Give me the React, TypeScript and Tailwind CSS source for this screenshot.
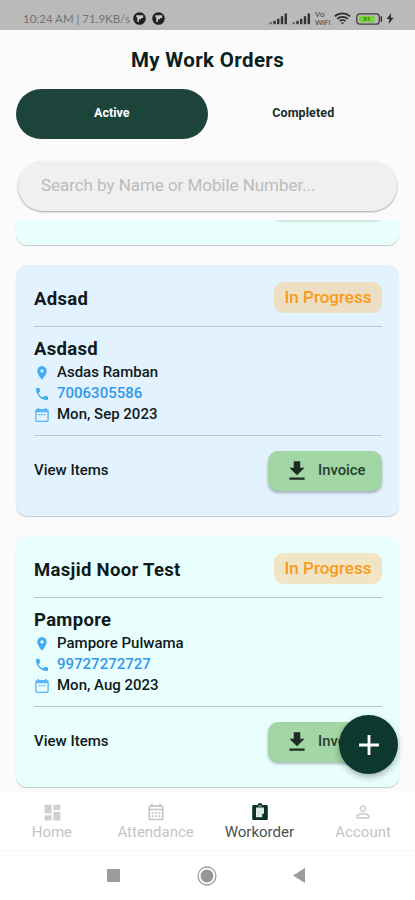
import { useState } from 'react';
import clsx from 'clsx';
import {
  MdAdd,
  MdDashboard,
  MdDownload,
  MdLocationOn,
  MdOutlineCalendarMonth,
  MdPersonOutline,
  MdPhone,
} from 'react-icons/md';

type WorkOrder = {
  id: number;
  title: string;
  customer: string;
  address: string;
  phone: string;
  date: string;
  status: string;
};

const orders: WorkOrder[] = [
  {
    id: 1,
    title: 'Adsad',
    customer: 'Asdasd',
    address: 'Asdas Ramban',
    phone: '7006305586',
    date: 'Mon, Sep 2023',
    status: 'In Progress',
  },
  {
    id: 2,
    title: 'Masjid Noor Test',
    customer: 'Pampore',
    address: 'Pampore Pulwama',
    phone: '99727272727',
    date: 'Mon, Aug 2023',
    status: 'In Progress',
  },
];

const tabs = ['Active', 'Completed'];

export default function App() {
  const [tab, setTab] = useState('Active');
  const [search, setSearch] = useState('');

  return (
    <div className="relative flex h-[900px] w-[415px] flex-col overflow-hidden bg-[#fbfbfb] font-['Roboto',sans-serif] text-[#111a1b]">
      <StatusBar />

      <h1 className="pt-4 text-center text-[20.5px] leading-7 font-bold tracking-[0.35px] text-[#0c1f1f]">
        My Work Orders
      </h1>

      <div className="mx-4 mt-[15px] flex h-[50px]">
        {tabs.map((name) => (
          <button
            key={name}
            type="button"
            onClick={() => setTab(name)}
            className={clsx(
              'w-1/2 rounded-full pb-0.5 text-[12.5px] font-bold',
              tab === name ? 'bg-[#1d443b] text-white' : 'tracking-[0.1px] text-[#1b2c29]',
            )}
          >
            {name}
          </button>
        ))}
      </div>

      <input
        value={search}
        onChange={(event) => setSearch(event.target.value)}
        placeholder="Search by Name or Mobile Number..."
        className="relative z-10 mx-[18px] mt-[22px] h-[50px] shrink-0 rounded-full bg-[#f0f0f0] px-[23px] pb-0.5 text-[17px] tracking-[-0.05px] shadow-[0_1px_2px_rgba(0,0,0,0.35)] outline-none placeholder:text-[#bcbcbc]"
      />

      <div className="mt-[9px] flex h-[573px] shrink-0 flex-col gap-5 overflow-hidden px-4">
        <div className="h-[25px] shrink-0 rounded-b-[11px] bg-[#e8fffe] pr-[19px] shadow-[0_1px_1px_rgba(0,0,0,0.2)]">
          <div className="ml-auto h-[2px] w-[104px] rounded-b-full bg-gradient-to-b from-[#e3eeee] to-[#cddcdc]" />
        </div>
        {orders.map((order, index) => (
          <OrderCard key={order.id} order={order} tinted={index % 2 === 0} />
        ))}
      </div>

      <button
        type="button"
        aria-label="Add work order"
        className="absolute top-[715px] left-[339px] flex size-[59px] items-center justify-center rounded-full bg-[#0d382e] text-white shadow-[0_3px_6px_rgba(0,0,0,0.3)]"
      >
        <MdAdd className="size-[34px]" />
      </button>

      <BottomNav />
      <SystemNav />
    </div>
  );
}

function OrderCard({ order, tinted }: { order: WorkOrder; tinted: boolean }) {
  return (
    <article
      className={clsx(
        'h-[251px] shrink-0 rounded-[11px] pr-[17px] pl-[18px] shadow-[0_1px_1px_rgba(0,0,0,0.2)]',
        tinted ? 'bg-[#e2f2fe]' : 'bg-[#e8fffe]',
      )}
    >
      <div className="flex h-[62px] items-center justify-between border-b border-[#b9c6cc] pt-1">
        <h2 className="pt-1 text-[18.5px] font-bold tracking-[0.32px]">{order.title}</h2>
        <span
          className={clsx(
            'flex h-[31px] w-[108px] items-center justify-center rounded-[9px] pt-px text-[17px] font-medium text-[#f99b16]',
            tinted ? 'bg-[#ecdfc3]' : 'bg-[#f2e5c6]',
          )}
        >
          {order.status}
        </span>
      </div>

      <div className="h-[109px] border-b border-[#b9c6cc] pt-[9px]">
        <h3 className="text-[18.5px] leading-[26px] font-bold tracking-[0.32px]">
          {order.customer}
        </h3>
        <p className="flex h-[21px] items-center gap-[7px] text-[15px] font-medium">
          <MdLocationOn className="size-4 text-[#42a9f3]" />
          {order.address}
        </p>
        <p className="flex h-[21px] items-center gap-[7px] text-[15px] font-medium text-[#3498ea]">
          <MdPhone className="size-4 text-[#42a9f3]" />
          {order.phone}
        </p>
        <p className="flex h-[21px] items-center gap-[7px] text-[15px] font-medium">
          <CalendarIcon />
          {order.date}
        </p>
      </div>

      <div className="flex h-[69px] items-center justify-between">
        <span className="text-[15px] font-medium">View Items</span>
        <button
          type="button"
          className="flex h-10 w-[114px] items-center gap-2 rounded-[10px] bg-[#a2d6a4] pl-4 text-[14.8px] font-medium text-[#26402c] shadow-[0_2px_3px_rgba(0,0,0,0.28)]"
        >
          <MdDownload className="size-[26px] text-[#1c2c20]" />
          Invoice
        </button>
      </div>
    </article>
  );
}

function StatusBar() {
  return (
    <div className="flex h-[30px] shrink-0 items-center bg-[#bababa] pt-[7px] pr-[21px] pl-[23px] text-[#2e2e2e]">
      <span className="w-[110px] font-['Lato',sans-serif] text-[11.5px] whitespace-nowrap text-[#747474]">
        10:24 AM | 71.9KB/s
      </span>
      <AppBadge />
      <AppBadge className="ml-[6px]" />
      <div className="ml-auto flex items-center">
        <SignalIcon />
        <SignalIcon className="ml-1" />
        <div className="mr-px ml-1 flex w-[18px] flex-col gap-px text-[8px] text-[#444]">
          <span className="h-[7px] leading-[7px]">Vo</span>
          <span className="h-[7px] leading-[7px]">WiFi</span>
        </div>
        <WifiIcon />
        <svg className="ml-[5px] h-3 w-[27px]" viewBox="0 0 27 12" fill="none">
          <rect x="0.8" y="0.8" width="22.5" height="10.4" rx="3" stroke="#3d3d3d" strokeWidth="1.3" />
          <rect x="3" y="2.8" width="15.5" height="6.4" rx="1.2" fill="#72d631" />
          <path d="M25.3 3.8v4.4" stroke="#3d3d3d" strokeWidth="1.6" strokeLinecap="round" />
          <text x="7.6" y="8.2" fontSize="6" fontWeight="700" fill="#3f7d1d">
            81
          </text>
        </svg>
        <svg className="ml-[3px] h-[11px] w-2" viewBox="0 0 8 11">
          <path d="M5.2 0 .6 6h2.7L2.7 11 7.6 4.7H4.7z" fill="#2e2e2e" />
        </svg>
      </div>
    </div>
  );
}

function AppBadge({ className }: { className?: string }) {
  return (
    <svg className={clsx('size-[13px]', className)} viewBox="0 0 13 13">
      <circle cx="6.5" cy="6.5" r="6.3" fill="#222" />
      <path d="M3.3 3.2h6.9v2.7H8.1v1.3H5.9v2.9H4.3V5.2h-1z" fill="#c9c9c9" />
    </svg>
  );
}

function SignalIcon({ className }: { className?: string }) {
  return (
    <svg className={clsx('h-[13px] w-[19px]', className)} viewBox="0 0 19 13" fill="#333">
      <rect x="0.5" y="10" width="2.4" height="2.2" opacity="0.6" />
      <rect x="4.3" y="8.8" width="2.4" height="3.4" />
      <rect x="8" y="6.8" width="2.4" height="5.4" />
      <rect x="11.8" y="4.2" width="2.4" height="8" />
      <rect x="15.6" y="1.5" width="2.4" height="10.7" />
    </svg>
  );
}

function WifiIcon() {
  return (
    <svg className="h-[13px] w-[17px]" viewBox="0 0 17 13" fill="none" stroke="#2e2e2e">
      <path d="M.8 4.3c4.4-3.9 11-3.9 15.4 0M3.2 6.8c3-2.7 7.6-2.7 10.6 0" strokeWidth="1.8" />
      <path d="M5.6 9.2c1.6-1.6 4.2-1.6 5.8 0" strokeWidth="1.7" />
      <path d="M7 10.8 8.5 12.6 10 10.8c-.9-.7-2.1-.7-3 0z" fill="#2e2e2e" stroke="none" />
    </svg>
  );
}

function CalendarIcon() {
  return (
    <svg className="size-4" viewBox="0 0 16 16" fill="none" stroke="#58b4f5">
      <rect x="1.9" y="2.6" width="12.2" height="11.8" rx="1.4" strokeWidth="1.3" />
      <path d="M2 4.2h12" strokeWidth="2.2" />
      <path d="M4.3 1v2M11.7 1v2" strokeWidth="1.5" />
      <path d="M4.6 7.6h1.8M7.3 7.6h1.6M9.8 7.6h1.6" strokeWidth="1.4" />
    </svg>
  );
}

function ClipboardIcon() {
  return (
    <svg className="ml-px size-5" viewBox="0 0 20 20">
      <path d="M3.5 3h4a2.6 2.6 0 0 1 5 0h4q1.3 0 1.3 1.3v12.4q0 1.3-1.3 1.3h-13q-1.3 0-1.3-1.3V4.3Q2.2 3 3.5 3z" fill="#0b2f26" />
      <path d="M6 5.6h8v6.2h-1.8v3.4H6z" fill="#dfe7e4" />
      <path d="M8.3 3.2h3.4v1.6H8.3z" fill="#7d918b" />
    </svg>
  );
}

const navItems = [
  { label: 'Home', icon: <MdDashboard className="ml-0.5 size-[21px] text-[#d0d0d0]" /> },
  { label: 'Attendance', icon: <MdOutlineCalendarMonth className="size-5" /> },
  { label: 'Workorder', icon: <ClipboardIcon /> },
  { label: 'Account', icon: <MdPersonOutline className="size-5 text-[#d0d0d0]" /> },
];

function BottomNav() {
  return (
    <nav className="flex h-[58px] shrink-0 border-b border-[#f8f8f8] bg-white pt-[9px]">
      {navItems.map((item) => (
        <a
          key={item.label}
          href="#"
          className={clsx(
            'flex w-1/4 flex-col items-center text-[15px]',
            item.label === 'Workorder' ? 'text-[#46534f]' : 'text-[#c4c4c4]',
          )}
        >
          <span className="flex h-5 items-center">{item.icon}</span>
          <span className="leading-5">{item.label}</span>
        </a>
      ))}
    </nav>
  );
}

function SystemNav() {
  return (
    <div className="flex flex-1 items-center justify-center bg-white pr-[3px]">
      <div className="size-[13px] bg-[#9c9c9c]" />
      <svg className="mr-[76px] ml-[77px] size-5" viewBox="0 0 20 20">
        <circle cx="10" cy="10" r="9" fill="none" stroke="#9c9c9c" strokeWidth="1.3" />
        <circle cx="10" cy="10" r="6.4" fill="#969696" />
      </svg>
      <svg className="h-[15px] w-3" viewBox="0 0 12 15">
        <path d="M12 0v15L0 7.5z" fill="#9c9c9c" />
      </svg>
    </div>
  );
}
